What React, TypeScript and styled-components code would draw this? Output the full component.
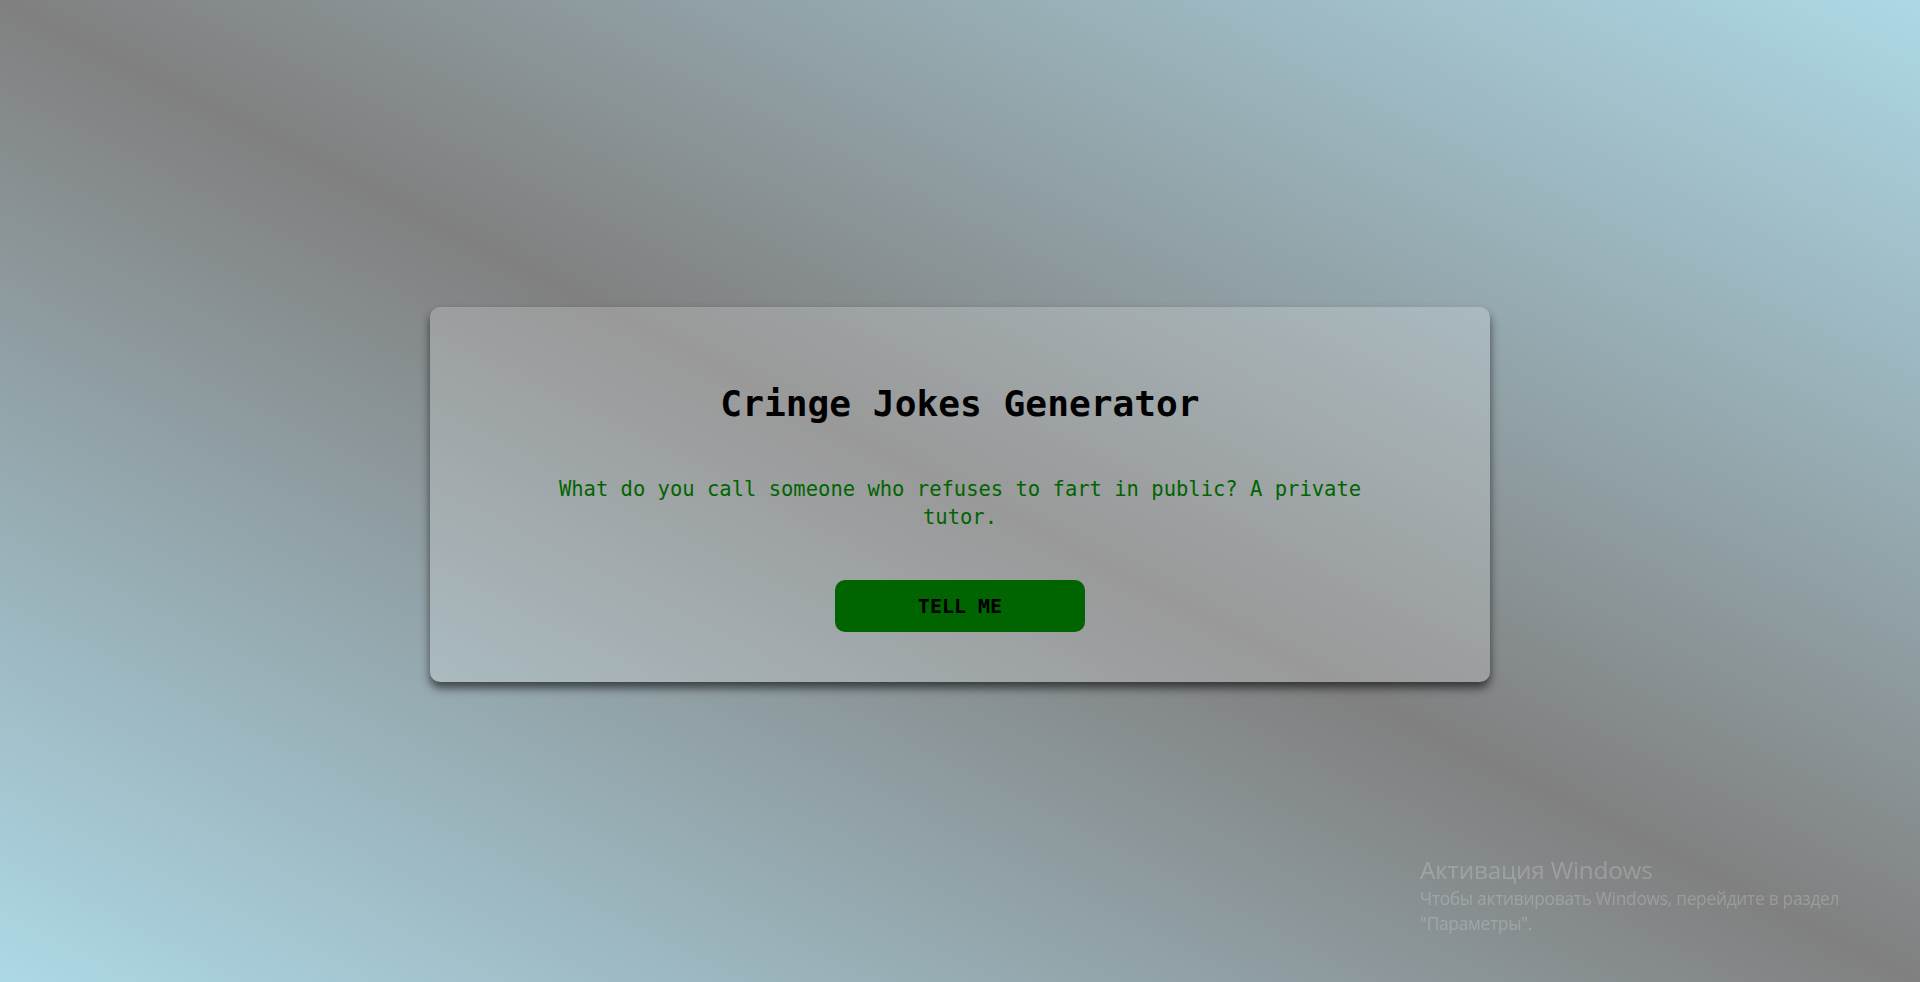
import React from "react";
import styled, { createGlobalStyle } from "styled-components";

const GlobalStyle = createGlobalStyle`
  html, body {
    margin: 0;
    padding: 0;
  }
  body {
    min-height: 100vh;
    background: linear-gradient(to top right, #add8e6, #808080, #add8e6);
    background-attachment: fixed;
    font-family: "DejaVu Sans Mono", monospace;
  }
`;

const Page = styled.main`
  box-sizing: border-box;
  min-height: 100vh;
  padding-top: 7px;
  display: flex;
  align-items: center;
  justify-content: center;
`;

const Card = styled.section`
  box-sizing: border-box;
  width: 1060px;
  padding: 75px 110px 50px;
  border-radius: 10px;
  background: rgba(255, 255, 255, 0.2);
  box-shadow: 0 6px 10px rgba(0, 0, 0, 0.6);
  display: flex;
  flex-direction: column;
  align-items: center;
`;

const Title = styled.h1`
  margin: 0;
  font-family: "DejaVu Sans Mono", monospace;
  font-size: 36.2px;
  line-height: 44px;
  font-weight: 700;
  color: #000;
  text-align: center;
`;

const Joke = styled.p`
  margin: 49px 0 0;
  width: 100%;
  font-family: "DejaVu Sans Mono", monospace;
  font-size: 20.5px;
  line-height: 28px;
  color: #006400;
  text-align: center;
`;

const Button = styled.button`
  margin-top: 49px;
  width: 250px;
  height: 52px;
  border: none;
  border-radius: 10px;
  background: #006400;
  color: #000;
  font-family: "DejaVu Sans Mono", monospace;
  font-size: 20px;
  font-weight: 700;
  text-transform: uppercase;
  cursor: pointer;
`;

const Watermark = styled.div`
  position: fixed;
  left: 1420px;
  top: 853px;
  font-family: "Open Sans", "Noto Sans", sans-serif;
  color: rgba(255, 255, 255, 0.2);
  pointer-events: none;
`;

const WatermarkTitle = styled.div`
  font-size: 24.3px;
  line-height: 33px;
  letter-spacing: -0.2px;
`;

const WatermarkText = styled.div`
  font-size: 17.4px;
  line-height: 25px;
  letter-spacing: -0.3px;
`;

export default function App() {
  return (
    <>
      <GlobalStyle />
      <Page>
        <Card>
          <Title>Cringe Jokes Generator</Title>
          <Joke>What do you call someone who refuses to fart in public? A private tutor.</Joke>
          <Button>Tell me</Button>
        </Card>
      </Page>
      <Watermark>
        <WatermarkTitle>Активация Windows</WatermarkTitle>
        <WatermarkText>
          Чтобы активировать Windows, перейдите в раздел
          <br />
          "Параметры".
        </WatermarkText>
      </Watermark>
    </>
  );
}
